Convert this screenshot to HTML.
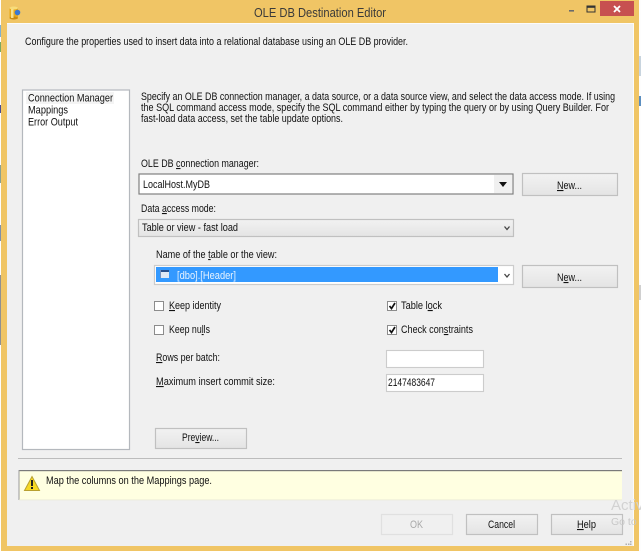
<!DOCTYPE html>
<html>
<head>
<meta charset="utf-8">
<title>OLE DB Destination Editor</title>
<style>
html,body{margin:0;padding:0;background:#fff;width:641px;height:551px;overflow:hidden}
svg{display:block;filter:blur(0.35px)}
text{font-family:"Liberation Sans",sans-serif;font-size:11px;fill:#111}
.u{text-decoration:underline}
</style>
</head>
<body>
<svg width="641" height="551" viewBox="0 0 641 551" xmlns="http://www.w3.org/2000/svg">
<defs>
<linearGradient id="b" x1="0" y1="0" x2="0" y2="1"><stop offset="0" stop-color="#f2f2f2"/><stop offset="1" stop-color="#e4e4e4"/></linearGradient>
</defs>
<rect width="641" height="551" fill="#fdfdfd"/>
<!-- desktop noise at edges -->
<rect x="0" y="25" width="1" height="12" fill="#7fb0d0"/>
<rect x="0" y="42" width="1" height="10" fill="#7aa860"/>
<rect x="0" y="105" width="1" height="8" fill="#4a4a90"/>
<rect x="0" y="165" width="1" height="18" fill="#8aa090"/>
<rect x="0" y="225" width="1" height="16" fill="#8090a8"/>
<rect x="0" y="275" width="1" height="70" fill="#909090"/>
<rect x="639" y="56" width="2" height="20" fill="#c8d4de"/>
<rect x="639" y="96" width="2" height="10" fill="#5c8fc0"/>
<rect x="639" y="285" width="2" height="15" fill="#d0d0d0"/>
<!-- window frame -->
<rect x="1" y="0" width="638" height="551" fill="#f0c565"/>
<rect x="7" y="23" width="627" height="523" fill="#f0f0f0"/>
<rect x="7" y="23" width="627" height="1" fill="#fbfbfb"/>
<rect x="633" y="23" width="1" height="523" fill="#fbfbfb"/>
<!-- title icon -->
<rect x="9.500" y="8" width="8.500" height="10" fill="#e8a91c"/>
<ellipse cx="13.750" cy="8" rx="4.250" ry="1.500" fill="#f7dc7a"/>
<ellipse cx="13.750" cy="18" rx="4.250" ry="1.500" fill="#c98a10"/>
<rect x="11" y="9" width="2.500" height="9" fill="#f8e08a"/>
<circle cx="17.500" cy="12.500" r="2.800" fill="#3a78d0"/>
<text x="254" y="17" style="font-size:13px;fill:#3a3a3a" textLength="132" lengthAdjust="spacingAndGlyphs">OLE DB Destination Editor</text>
<!-- window controls -->
<rect x="569" y="10" width="5" height="1.600" fill="#6a6a6a"/>
<rect x="587" y="6" width="8" height="6" fill="none" stroke="#333" stroke-width="1"/>
<rect x="587" y="6" width="8" height="1.800" fill="#333"/>
<rect x="600" y="1" width="34" height="15" fill="#c75050"/>
<path d="M614 6 L620 12 M620 6 L614 12" stroke="#fff" stroke-width="1.800"/>
<text x="25" y="45" textLength="383" lengthAdjust="spacingAndGlyphs">Configure the properties used to insert data into a relational database using an OLE DB provider.</text>
<!-- list -->
<rect x="22.500" y="90" width="107" height="359.500" fill="#fff" stroke="#b4b8bd" stroke-width="1.200"/>
<rect x="26" y="92" width="88" height="12" fill="#f4f4f4"/>
<text x="28" y="101.500" textLength="85" lengthAdjust="spacingAndGlyphs">Connection Manager</text>
<text x="28" y="113.500" textLength="40" lengthAdjust="spacingAndGlyphs">Mappings</text>
<text x="28" y="125.500" textLength="50" lengthAdjust="spacingAndGlyphs">Error Output</text>
<!-- paragraph -->
<text x="141" y="100" textLength="474" lengthAdjust="spacingAndGlyphs">Specify an OLE DB connection manager, a data source, or a data source view, and select the data access mode. If using</text>
<text x="141" y="111" textLength="468" lengthAdjust="spacingAndGlyphs">the SQL command access mode, specify the SQL command either by typing the query or by using Query Builder. For</text>
<text x="141" y="122" textLength="202" lengthAdjust="spacingAndGlyphs">fast-load data access, set the table update options.</text>
<!-- connection manager -->
<text x="141" y="167" textLength="118" lengthAdjust="spacingAndGlyphs">OLE DB <tspan class="u">c</tspan>onnection manager:</text>
<rect x="139" y="174" width="374" height="20" fill="#fff" stroke="#808080" stroke-width="1.200"/>
<rect x="494" y="175" width="18" height="18" fill="#f0f0f0"/>
<path d="M499 182 H507 L503 187 Z" fill="#111"/>
<text x="143" y="188" textLength="67" lengthAdjust="spacingAndGlyphs">LocalHost.MyDB</text>
<rect x="522.500" y="173.500" width="95" height="22" fill="url(#b)" stroke="#c0c0c0" stroke-width="1.200"/>
<text x="557" y="189" textLength="25" lengthAdjust="spacingAndGlyphs"><tspan class="u">N</tspan>ew...</text>
<!-- data access -->
<text x="141" y="212" textLength="75" lengthAdjust="spacingAndGlyphs">Data <tspan class="u">a</tspan>ccess mode:</text>
<rect x="138.500" y="219.500" width="375" height="17" fill="url(#b)" stroke="#c0c0c0" stroke-width="1.200"/>
<text x="142" y="231" textLength="96" lengthAdjust="spacingAndGlyphs">Table or view - fast load</text>
<path d="M504.500 226.500 L507 229.500 L509.500 226.500" fill="none" stroke="#444" stroke-width="1.300"/>
<!-- table -->
<text x="156" y="258" textLength="121" lengthAdjust="spacingAndGlyphs">Name of the <tspan class="u">t</tspan>able or the view:</text>
<rect x="154.500" y="265.500" width="359" height="19" fill="#fff" stroke="#cccccc" stroke-width="1.200"/>
<rect x="156" y="267" width="342" height="15" fill="#3399ff"/>
<rect x="160" y="270" width="9" height="8" fill="#dfe8f5"/>
<rect x="160" y="270" width="9" height="2" fill="#27508f"/>
<rect x="160" y="270" width="1" height="8" fill="#6f8fc0"/>
<text x="177" y="279" style="fill:#e8f3ff" textLength="59" lengthAdjust="spacingAndGlyphs">[dbo].[Header]</text>
<path d="M504.500 274 L507 277 L509.500 274" fill="none" stroke="#444" stroke-width="1.300"/>
<rect x="522.500" y="265.500" width="95" height="22" fill="url(#b)" stroke="#c0c0c0" stroke-width="1.200"/>
<text x="557" y="281" textLength="25" lengthAdjust="spacingAndGlyphs">N<tspan class="u">e</tspan>w...</text>
<!-- checkboxes -->
<rect x="154.500" y="301.500" width="9" height="9" fill="#fff" stroke="#8c8c8c"/>
<text x="169" y="309" textLength="52" lengthAdjust="spacingAndGlyphs"><tspan class="u">K</tspan>eep identity</text>
<rect x="154.500" y="325.500" width="9" height="9" fill="#fff" stroke="#8c8c8c"/>
<text x="169" y="333" textLength="41" lengthAdjust="spacingAndGlyphs">Keep nu<tspan class="u">l</tspan>ls</text>
<rect x="387.500" y="301.500" width="9" height="9" fill="#fff" stroke="#8c8c8c"/>
<path d="M389.500 306 L391.500 308.500 L395 303" fill="none" stroke="#111" stroke-width="1.700"/>
<text x="401" y="309" textLength="41" lengthAdjust="spacingAndGlyphs">Table l<tspan class="u">o</tspan>ck</text>
<rect x="387.500" y="325.500" width="9" height="9" fill="#fff" stroke="#8c8c8c"/>
<path d="M389.500 330 L391.500 332.500 L395 327" fill="none" stroke="#111" stroke-width="1.700"/>
<text x="401" y="333" textLength="72" lengthAdjust="spacingAndGlyphs">Check con<tspan class="u">s</tspan>traints</text>
<!-- inputs -->
<text x="156" y="361" textLength="64" lengthAdjust="spacingAndGlyphs"><tspan class="u">R</tspan>ows per batch:</text>
<text x="156" y="385" textLength="119" lengthAdjust="spacingAndGlyphs"><tspan class="u">M</tspan>aximum insert commit size:</text>
<rect x="386.500" y="350.500" width="97" height="17" fill="#fff" stroke="#cccccc" stroke-width="1.100"/>
<rect x="386.500" y="374.500" width="97" height="17" fill="#fff" stroke="#cccccc" stroke-width="1.100"/>
<text x="388" y="386" textLength="47" lengthAdjust="spacingAndGlyphs">2147483647</text>
<!-- preview -->
<rect x="155.500" y="428.500" width="91" height="20" fill="url(#b)" stroke="#c0c0c0" stroke-width="1.200"/>
<text x="182" y="441" textLength="37" lengthAdjust="spacingAndGlyphs">Pre<tspan class="u">v</tspan>iew...</text>
<!-- separator -->
<rect x="18" y="458" width="604" height="1" fill="#bcbcbc"/>
<!-- message -->
<rect x="19" y="470" width="603" height="30" fill="#ffffe1"/>
<rect x="19" y="470" width="603" height="1.200" fill="#7a7a7a"/>
<rect x="18.500" y="470" width="1" height="30" fill="#9a9a9a"/>
<rect x="19" y="499.500" width="603" height="0.800" fill="#e8e8d8"/>
<path d="M32 476.500 L39.500 490.500 H24.500 Z" fill="#f6d824" stroke="#b8a030" stroke-width="1"/>
<rect x="31" y="480" width="2" height="6" fill="#222"/>
<rect x="31" y="487" width="2" height="2" fill="#222"/>
<text x="46" y="484" textLength="166" lengthAdjust="spacingAndGlyphs">Map the columns on the Mappings page.</text>
<!-- bottom buttons -->
<rect x="381.500" y="514.500" width="71" height="20" fill="#f0f0f0" stroke="#e0e0e0" stroke-width="1.200"/>
<text x="410" y="528" style="fill:#a8a8a8" textLength="13" lengthAdjust="spacingAndGlyphs">OK</text>
<rect x="466.500" y="514.500" width="71" height="20" fill="url(#b)" stroke="#c0c0c0" stroke-width="1.200"/>
<text x="488" y="528" textLength="27" lengthAdjust="spacingAndGlyphs">Cancel</text>
<rect x="551.500" y="514.500" width="71" height="20" fill="url(#b)" stroke="#c0c0c0" stroke-width="1.200"/>
<text x="577" y="528" textLength="19" lengthAdjust="spacingAndGlyphs"><tspan class="u">H</tspan>elp</text>
<!-- grip -->
<path d="M630 541h1.500v1.500H630z M628 543.500h1.500V545H628z M630 543.500h1.500V545H630z M625.500 543.500h1.500V545h-1.500z" fill="#b0b0b0"/>
<!-- activation watermark -->
<text x="611" y="510" style="font-size:15px;fill:#d2d2d2">Activ</text>
<text x="611" y="525" style="font-size:10.500px;fill:#c8c8c8">Go to</text>
</svg>
</body>
</html>
